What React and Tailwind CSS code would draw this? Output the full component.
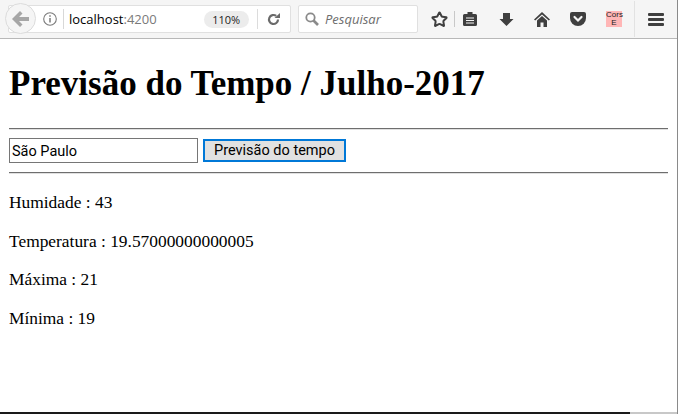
import { Star } from "lucide-react";

const Toolbar = () => (
  <div className="flex items-center h-[39px] shrink-0 bg-[#f5f5f5] border-b border-[#b8b8b8] pl-[8px] font-['Open_Sans',sans-serif]">
    {/* back button + url bar */}
    <div className="relative flex items-center w-[283px] h-[28px] bg-white border border-[#e0e0e0] rounded-[2px]">
      <div className="absolute left-[-4px] top-[-3px] w-[31px] h-[31px] rounded-full bg-[#f5f5f5] border border-[#dcdcdc] flex items-center justify-center">
        <svg width="17" height="16" viewBox="0 0 17 16">
          <path d="M8 0 10.500 2.500 7 6H17V10H7L10.500 13.500 8 16 0 8z" fill="#a6a6a6" />
        </svg>
      </div>
      <svg width="14" height="14" viewBox="0 0 14 14" className="ml-[34px]">
        <circle cx="7" cy="7" r="6.300" fill="none" stroke="#7a7a7a" strokeWidth="1.100" />
        <path d="M7 6v4.500M7 3.200v1.500" stroke="#7a7a7a" strokeWidth="1.500" />
      </svg>
      <div className="w-px h-[20px] bg-[#d8d8d8] ml-[6px]" />
      <span className="ml-[5px] text-[13px] leading-none text-black">
        localhost<span className="text-[#7a7a7a]">:4200</span>
      </span>
      <span className="ml-[47px] w-[45px] h-[17px] rounded-full bg-[#ececec] text-[11px] leading-[17px] text-center text-[#222]">110%</span>
      <div className="w-px h-[20px] bg-[#dcdcdc] ml-[8px]" />
      <svg width="13" height="13" viewBox="0 0 13 13" className="ml-[9px]">
        <path d="M11 6.500A4.500 4.500 0 1 1 9.200 2.900" fill="none" stroke="#6a6a6a" strokeWidth="2.200" />
        <path d="M7.500 5H13V0z" fill="#6a6a6a" />
      </svg>
    </div>
    <div className="flex items-center w-[120px] h-[28px] ml-[7px] bg-white border border-[#e0e0e0] rounded-[2px]">
      <svg width="14" height="14" viewBox="0 0 14 14" className="ml-[6px]">
        <circle cx="5.500" cy="5.500" r="4.200" fill="none" stroke="#8a8a8a" strokeWidth="1.800" />
        <path d="M8.500 8.500 13 13" stroke="#8a8a8a" strokeWidth="2.600" />
      </svg>
      <span className="ml-[6px] text-[13px] italic text-[#6d6d6d] leading-none">Pesquisar</span>
    </div>
    <Star size={17} strokeWidth={2.8} className="ml-[13px] text-[#3f3f3f]" />
    <div className="w-px h-[16px] bg-[#c8c8c8] ml-[6px]" />
    {/* reading list */}
    <svg width="14" height="14" viewBox="0 0 14 14" className="ml-[8px]">
      <path d="M0 3.500Q0 2 1.500 2H4.500V0H9.500V2H12.500Q14 2 14 3.500V12.500Q14 14 12.500 14H1.500Q0 14 0 12.500z" fill="#3f3f3f" />
      <path d="M3 6h8M3 8.500h8M3 11h8" stroke="#f5f5f5" strokeWidth="1.100" />
    </svg>
    {/* download */}
    <svg width="15" height="15" viewBox="0 0 15 15" className="ml-[22px]">
      <path d="M4 1h7v6h3.500L7.500 14 .5 7H4z" fill="#3f3f3f" />
    </svg>
    {/* home */}
    <svg width="16" height="15" viewBox="0 0 16 15" className="ml-[20px]">
      <path d="M8 0 16 7.500 14.800 8.500 8 2.500 1.200 8.500 0 7.500z" fill="#3f3f3f" />
      <path d="M8 4 13 8.500V15H9.500V10.500h-3V15H3V8.500z" fill="#3f3f3f" />
    </svg>
    {/* pocket */}
    <svg width="16" height="14" viewBox="0 0 16 14" className="ml-[20px]">
      <path d="M2 0h12a2 2 0 0 1 2 2v4a8 8 0 0 1-16 0V2a2 2 0 0 1 2-2z" fill="#3f3f3f" />
      <path d="M4.500 5 8 8.500 11.500 5" fill="none" stroke="#f5f5f5" strokeWidth="2.200" strokeLinecap="round" />
    </svg>
    <div className="ml-[20px] w-[16px] h-[16px] bg-[#ffb6b6] text-[8px] leading-[8px] text-center text-[#222] font-['Liberation_Sans',sans-serif]">
      Cors<br />E
    </div>
    <div className="w-px h-[36px] bg-[#e2e2e2] ml-[12px]" />
    {/* menu */}
    <div className="ml-[13px] flex flex-col gap-[2px]">
      <div className="w-[16px] h-[3px] rounded-[1px] bg-[#3f3f3f]" />
      <div className="w-[16px] h-[3px] rounded-[1px] bg-[#3f3f3f]" />
      <div className="w-[16px] h-[3px] rounded-[1px] bg-[#3f3f3f]" />
    </div>
  </div>
);

export default function App() {
  return (
    <div className="w-[680px] h-[414px] overflow-hidden bg-white">
      <div className="flex flex-col w-[678px] h-full border-r border-[#8a8a8a]">
        <Toolbar />
        <div className="flex-1 pl-[9px] pr-[9px] font-['Liberation_Serif',serif] text-black">
          <h1 className="mt-[25px] text-[35px] leading-[40px] font-bold">Previsão do Tempo / Julho-2017</h1>
          <hr className="mt-[24px] border-t-0 h-[2px] bg-[linear-gradient(#6e6e6e_50%,#e0e0e0_50%)]" />
          <div className="flex items-center mt-[8px] h-[25px]">
            <input
              readOnly
              value="São Paulo"
              className="w-[189px] h-[25px] border border-[#767676] px-[2px] pt-px text-[14.5px] font-['Roboto',sans-serif] text-black outline-none"
            />
            <button className="ml-[5px] w-[143px] h-[23px] pt-px bg-[#e1e1e1] border-2 border-[#0078d7] text-[14.5px] leading-none font-['Roboto',sans-serif] text-black">
              Previsão do tempo
            </button>
          </div>
          <hr className="mt-[9px] border-t-0 h-[2px] bg-[linear-gradient(#6e6e6e_50%,#e0e0e0_50%)]" />
          <div className="flex flex-col gap-[18.67px] mt-[18px] text-[17.4px] leading-[20px]">
            <p>Humidade : 43</p>
            <p>Temperatura : 19.57000000000005</p>
            <p>Máxima : 21</p>
            <p>Mínima : 19</p>
          </div>
        </div>
        <div className="flex h-[2px] shrink-0">
          <div className="w-[630px] bg-[#1a1a1a]" />
          <div className="flex-1 bg-[#c8c8c8]" />
        </div>
      </div>
    </div>
  );
}
